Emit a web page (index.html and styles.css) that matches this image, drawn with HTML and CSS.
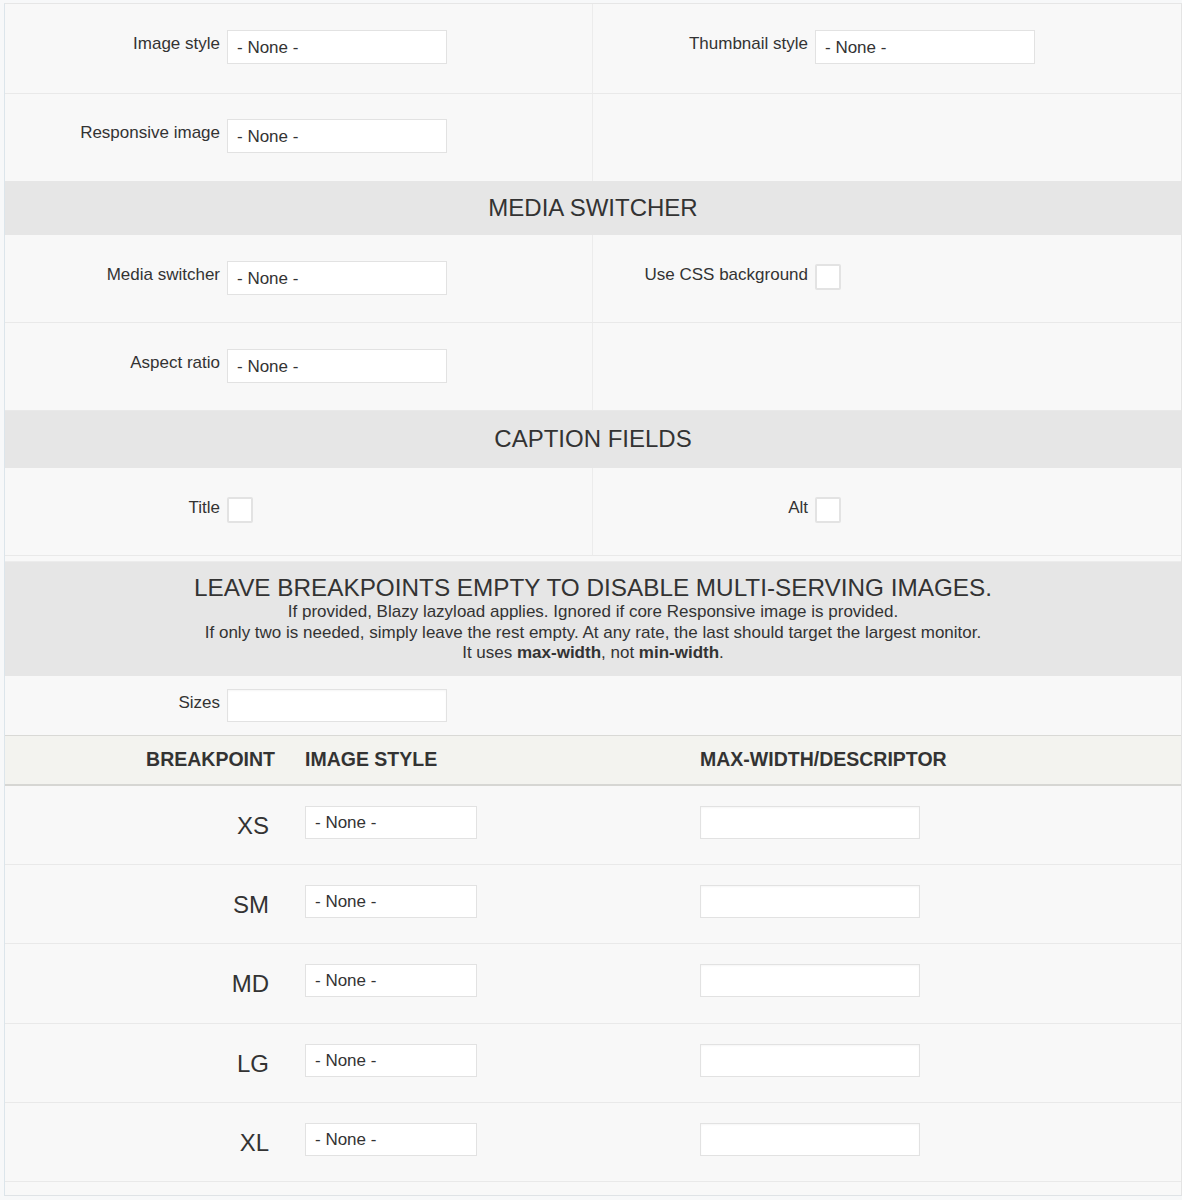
FILE: index.html
```html
<!DOCTYPE html>
<html lang="en">
<head>
<meta charset="utf-8">
<title>Blazy formatter settings</title>
<link rel="stylesheet" href="styles.css">
</head>
<body>
<div class="wrap">
  <div class="grid">
    <div class="cell cell-first">
      <label class="lbl">Image style</label>
      <select class="sel"><option>- None -</option></select>
    </div>
    <div class="cell cell-first">
      <label class="lbl">Thumbnail style</label>
      <select class="sel"><option>- None -</option></select>
    </div>
    <div class="cell cell-b">
      <label class="lbl">Responsive image</label>
      <select class="sel"><option>- None -</option></select>
    </div>
    <div class="cell cell-b"></div>
  </div>

  <h2 class="head">MEDIA SWITCHER</h2>

  <div class="grid">
    <div class="cell">
      <label class="lbl">Media switcher</label>
      <select class="sel"><option>- None -</option></select>
    </div>
    <div class="cell">
      <label class="lbl">Use CSS background</label>
      <span class="chk"></span>
    </div>
    <div class="cell">
      <label class="lbl">Aspect ratio</label>
      <select class="sel"><option>- None -</option></select>
    </div>
    <div class="cell"></div>
  </div>

  <h2 class="head head-cap">CAPTION FIELDS</h2>

  <div class="grid">
    <div class="cell">
      <label class="lbl">Title</label>
      <span class="chk"></span>
    </div>
    <div class="cell">
      <label class="lbl">Alt</label>
      <span class="chk"></span>
    </div>
  </div>

  <div class="note">
    <h2 class="note-title">LEAVE BREAKPOINTS EMPTY TO DISABLE MULTI-SERVING IMAGES.</h2>
    <p>If provided, Blazy lazyload applies. Ignored if core Responsive image is provided.</p>
    <p>If only two is needed, simply leave the rest empty. At any rate, the last should target the largest monitor.</p>
    <p>It uses <strong>max-width</strong>, not <strong>min-width</strong>.</p>
  </div>

  <div class="sizes">
    <label class="lbl">Sizes</label>
    <input class="txt" type="text">
  </div>

  <div class="bp">
    <div class="bp-head">
      <div class="c1">BREAKPOINT</div>
      <div class="c2">IMAGE STYLE</div>
      <div class="c3">MAX-WIDTH/DESCRIPTOR</div>
    </div>
    <div class="bp-row">
      <div class="c1 bp-name">XS</div>
      <div class="c2"><select class="sel sel-sm"><option>- None -</option></select></div>
      <div class="c3"><input class="txt txt-bp" type="text"></div>
    </div>
    <div class="bp-row">
      <div class="c1 bp-name">SM</div>
      <div class="c2"><select class="sel sel-sm"><option>- None -</option></select></div>
      <div class="c3"><input class="txt txt-bp" type="text"></div>
    </div>
    <div class="bp-row">
      <div class="c1 bp-name">MD</div>
      <div class="c2"><select class="sel sel-sm"><option>- None -</option></select></div>
      <div class="c3"><input class="txt txt-bp" type="text"></div>
    </div>
    <div class="bp-row">
      <div class="c1 bp-name">LG</div>
      <div class="c2"><select class="sel sel-sm"><option>- None -</option></select></div>
      <div class="c3"><input class="txt txt-bp" type="text"></div>
    </div>
    <div class="bp-row">
      <div class="c1 bp-name">XL</div>
      <div class="c2"><select class="sel sel-sm"><option>- None -</option></select></div>
      <div class="c3"><input class="txt txt-bp" type="text"></div>
    </div>
    <div class="bp-foot"></div>
  </div>
</div>
</body>
</html>
```

FILE: styles.css
```css
* { box-sizing: border-box; }

html, body {
  margin: 0;
  padding: 0;
  background: #f7f8f9;
}

body {
  font-family: "Liberation Sans", Arial, Helvetica, sans-serif;
  color: #333;
  font-size: 17px;
}

.wrap {
  margin: 3px 0 0 4px;
  border-left: 1px solid #dce5eb;
  border-top: 1px solid #e6e6e6;
  border-right: 1px solid #e4e4e4;
  border-bottom: 1px solid #dfe3e6;
  background: #f8f8f8;
}

.grid {
  display: grid;
  grid-template-columns: 1fr 1fr;
}

.cell {
  display: flex;
  align-items: flex-start;
  padding: 26px 0 0;
  height: 88px;
  border-bottom: 1px solid #e9e9e9;
}

.cell-first {
  height: 90px;
}

.cell:nth-child(odd) {
  border-right: 1px solid #ececec;
}

.cell-b {
  padding-top: 25px;
  height: 87px;
  border-bottom: none;
}

.lbl {
  width: 215px;
  flex: none;
  text-align: right;
  padding-right: 7px;
  box-sizing: content-box;
  font-size: 17px;
  line-height: 20px;
  margin-top: 4px;
  color: #333;
}

.sel {
  -webkit-appearance: none;
  appearance: none;
  width: 220px;
  height: 34px;
  border: 1px solid #e2e2e2;
  border-radius: 0;
  background: #fff;
  font-family: "Liberation Sans", Arial, sans-serif;
  font-size: 17px;
  color: #333;
  padding: 0 0 0 9px;
  margin: 0;
}

.chk {
  display: block;
  width: 26px;
  height: 26px;
  margin-top: 3px;
  background: #fff;
  border: 2px solid #e3e3e3;
  border-radius: 2px;
}

.head {
  margin: 0;
  background: #e6e6e6;
  font-weight: normal;
  font-size: 24px;
  line-height: 28px;
  text-align: center;
  padding: 13px 0;
  color: #333;
}

.head-cap {
  padding: 14px 0 15px;
}

.note {
  margin-top: 5px;
  border-top: 1px solid #ececec;
  background: #e6e6e6;
  text-align: center;
  padding: 12px 0 12px;
  color: #333;
}

.note-title {
  margin: 0;
  font-weight: normal;
  font-size: 24.3px;
  line-height: 28px;
}

.note p {
  margin: 0;
  font-size: 17px;
  line-height: 20.5px;
}

.note strong {
  font-weight: bold;
}

.sizes {
  display: flex;
  align-items: flex-start;
  padding: 13px 0 0;
  height: 59px;
}

.sizes .lbl {
  margin-top: 4px;
}

.txt {
  width: 220px;
  height: 33px;
  border: 1px solid #e2e2e2;
  background: #fff;
  margin: 0;
  padding: 0 8px;
  font-family: "Liberation Sans", Arial, sans-serif;
  font-size: 16px;
  box-shadow: inset 0 1px 2px rgba(0,0,0,0.04);
}

.bp-head,
.bp-row {
  display: grid;
  grid-template-columns: 285px 395px 1fr;
  align-items: center;
}

.bp-head {
  height: 51px;
  background: #f3f3ef;
  border-top: 1px solid #d9d9d6;
  border-bottom: 2px solid #d6d6d3;
  font-weight: bold;
  font-size: 19.5px;
  color: #333;
}

.bp-head .c1 {
  text-align: right;
  padding-right: 15px;
}

.bp-head .c2,
.bp-head .c3 {
  padding-left: 15px;
}

.bp-row {
  align-items: start;
  height: 79.4px;
  padding-top: 20px;
  border-bottom: 1px solid #e9e9e9;
}

.bp-row .c2,
.bp-row .c3 {
  padding-left: 15px;
}

.bp-name {
  text-align: right;
  padding-right: 21px;
  font-size: 24px;
  line-height: 28px;
  padding-top: 6px;
  color: #333;
}

.sel-sm {
  width: 172px;
  height: 33px;
  font-size: 17px;
  padding-left: 9px;
}

.txt-bp {
  width: 220px;
}

.bp-foot {
  height: 13px;
}
```
